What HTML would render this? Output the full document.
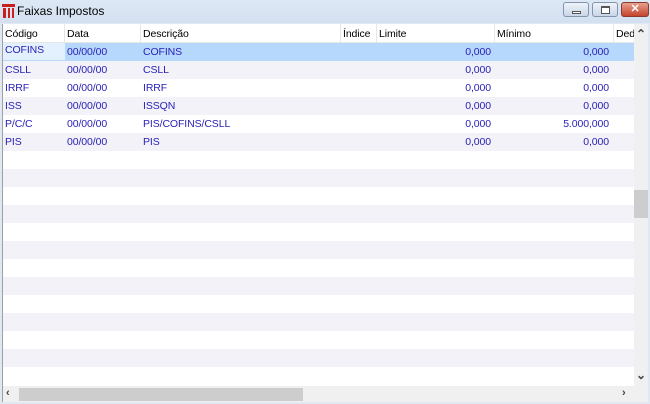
<!DOCTYPE html><html><head><style>
*{margin:0;padding:0;box-sizing:border-box}
body{width:650px;height:404px;overflow:hidden;background:#dfe8f3;font-family:"Liberation Sans",sans-serif;font-size:10.5px;letter-spacing:-0.1px;position:relative}
.title{position:absolute;left:0;top:0;width:650px;height:23px;background:linear-gradient(#dde8f5,#d3e0f0)}
.title span{position:absolute;left:17px;top:4px;font-size:12px;color:#000;letter-spacing:0}
.grid{position:absolute;left:2px;top:24px;width:646px;height:378px;background:#fff;border-left:1px solid #a0a0a0;overflow:hidden}
.hdr{position:absolute;top:0;left:0;height:19px;width:632px;background:#fff;border-bottom:1px solid #e6e6e6}
.c{position:absolute;white-space:nowrap;overflow:hidden}
.hdr .c{height:19px;border-right:1px solid #e6e6e6;top:0;padding:4px 0 0 2px}
.row{position:absolute;left:0;width:631px;height:18px;color:#2a22b8}
.row .c{top:3px}
.s{background:#f2f2f8}
.sel{background:#b6d8fc}
.r{text-align:right}
.vs{position:absolute;left:631px;top:0;width:14px;height:362px;background:#f0f0f0}
.hs{position:absolute;left:0;top:362px;width:645px;height:16px;background:#f0f0f0}
</style></head><body>
<div class="title"><svg style="position:absolute;left:2px;top:4px" width="13" height="14"><rect x="0" y="0" width="13" height="3" fill="#c8201c"/><rect x="1" y="4" width="3" height="10" fill="#c8201c"/><rect x="6" y="4" width="2" height="10" fill="#c8201c"/><rect x="10" y="4" width="2" height="10" fill="#c8201c"/></svg><span>Faixas Impostos</span>
<div style="position:absolute;left:563px;top:2px;width:26px;height:15px;border:1px solid #8394ad;border-radius:3px;background:linear-gradient(#eef3fa,#c9d6e8)"><div style="position:absolute;left:8px;top:8px;width:9px;height:3px;background:#fff;border:1px solid #555"></div></div>
<div style="position:absolute;left:592px;top:2px;width:26px;height:15px;border:1px solid #8394ad;border-radius:3px;background:linear-gradient(#eef3fa,#c9d6e8)"><div style="position:absolute;left:8px;top:3px;width:9px;height:8px;border:1px solid #555;border-top-width:2px;background:#fff"></div></div>
<div style="position:absolute;left:621px;top:2px;width:28px;height:15px;border:1px solid #8a3a32;border-radius:3px;background:linear-gradient(#e8a08e,#c4432c);color:#fff;font-weight:bold;font-size:11px;text-align:center;line-height:13px">✕</div>
</div>
<div class="grid">
<div class="hdr"><div class="c" style="left:0;width:62px">Código</div><div class="c" style="left:62px;width:76px">Data</div><div class="c" style="left:138px;width:200px">Descrição</div><div class="c" style="left:338px;width:36px">Índice</div><div class="c" style="left:374px;width:118px">Limite</div><div class="c" style="left:492px;width:119px">Mínimo</div><div class="c" style="left:611px;width:30px;border:0">Dedu</div></div>
<div class="row sel" style="top:19px"><div style="position:absolute;left:0;top:0;width:62px;height:17px;background:#e3f0fd"></div><div class="c" style="left:2px;top:1px">COFINS</div><div class="c" style="left:64px">00/00/00</div><div class="c" style="left:140px">COFINS</div><div class="c r" style="left:374px;width:114px">0,000</div><div class="c r" style="left:492px;width:114px">0,000</div></div>
<div class="row s" style="top:37px"><div class="c" style="left:2px">CSLL</div><div class="c" style="left:64px">00/00/00</div><div class="c" style="left:140px">CSLL</div><div class="c r" style="left:374px;width:114px">0,000</div><div class="c r" style="left:492px;width:114px">0,000</div></div>
<div class="row" style="top:55px"><div class="c" style="left:2px">IRRF</div><div class="c" style="left:64px">00/00/00</div><div class="c" style="left:140px">IRRF</div><div class="c r" style="left:374px;width:114px">0,000</div><div class="c r" style="left:492px;width:114px">0,000</div></div>
<div class="row s" style="top:73px"><div class="c" style="left:2px">ISS</div><div class="c" style="left:64px">00/00/00</div><div class="c" style="left:140px">ISSQN</div><div class="c r" style="left:374px;width:114px">0,000</div><div class="c r" style="left:492px;width:114px">0,000</div></div>
<div class="row" style="top:91px"><div class="c" style="left:2px">P/C/C</div><div class="c" style="left:64px">00/00/00</div><div class="c" style="left:140px">PIS/COFINS/CSLL</div><div class="c r" style="left:374px;width:114px">0,000</div><div class="c r" style="left:492px;width:114px">5.000,000</div></div>
<div class="row s" style="top:109px"><div class="c" style="left:2px">PIS</div><div class="c" style="left:64px">00/00/00</div><div class="c" style="left:140px">PIS</div><div class="c r" style="left:374px;width:114px">0,000</div><div class="c r" style="left:492px;width:114px">0,000</div></div>
<div class="row s" style="top:145px"></div><div class="row s" style="top:181px"></div><div class="row s" style="top:217px"></div><div class="row s" style="top:253px"></div><div class="row s" style="top:289px"></div><div class="row s" style="top:325px"></div>
<div class="vs"><div style="position:absolute;left:2px;top:3px;font-size:12px;color:#444;font-weight:bold">&#8963;</div><div style="position:absolute;left:0;top:166px;width:14px;height:28px;background:#cdcdcd"></div><div style="position:absolute;left:2px;top:344px;font-size:12px;color:#444;font-weight:bold">&#8964;</div></div>
<div class="hs"><div style="position:absolute;left:3px;top:1px;font-size:11px;color:#444;font-weight:bold">‹</div><div style="position:absolute;left:16px;top:2px;width:284px;height:13px;background:#cdcdcd"></div><div style="position:absolute;left:619px;top:1px;font-size:11px;color:#444;font-weight:bold">›</div></div>
</div>
</body></html>
